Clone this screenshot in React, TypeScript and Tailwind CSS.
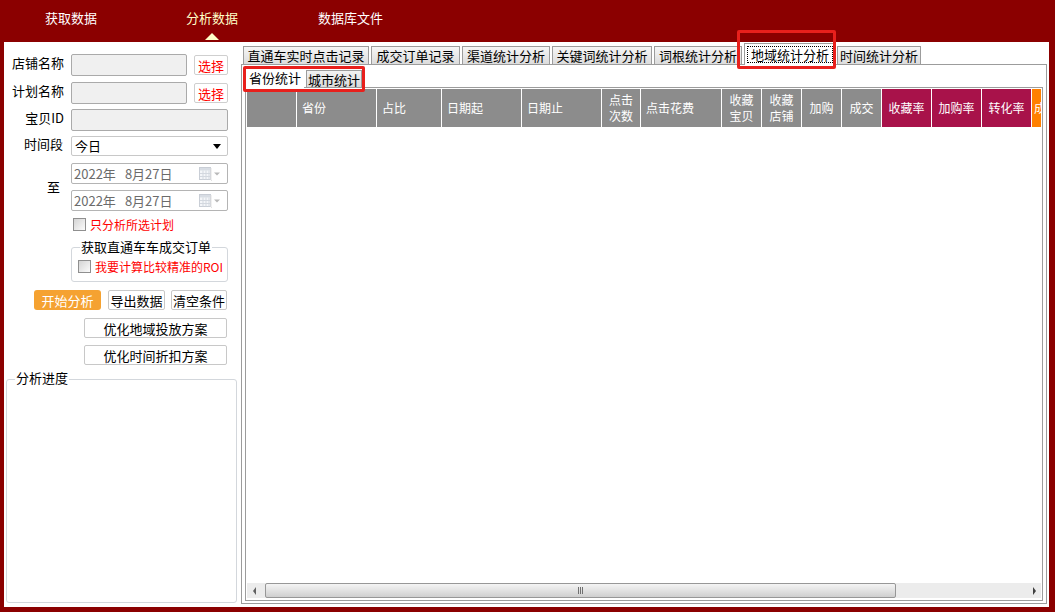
import React from "react";

function Check() {
  return (
    <span className="inline-block w-[13px] h-[13px] border border-[#8f8f8f] bg-linear-to-br from-[#d4d4d4] to-[#fbfbfb] shrink-0" />
  );
}

function CalIcon() {
  return (
    <svg width="22" height="14" viewBox="0 0 22 14">
      <rect x="0.5" y="0.5" width="11" height="12" fill="#f4f6f9" stroke="#c9ced6" />
      <rect x="1" y="1" width="10" height="2.5" fill="#d8dde4" />
      <path d="M1 6.5H11M1 9.5H11M4 3.5V12.5M7 3.5V12.5M10 3.5V12.5" stroke="#d3d8df" strokeWidth="1" />
      <path d="M12 13.5H13M12 1V13" stroke="#e2e2e2" />
      <path d="M15 5.5L21 5.5L18 8.5Z" fill="#b9b9b9" />
    </svg>
  );
}

function DateBox() {
  return (
    <div className="w-[157px] h-[21px] border border-[#b4b4b4] rounded-[2px] bg-white flex items-center pl-[2px] pr-[6px] text-[13px] text-[#6b6b6b] leading-none">
      <span>2022年</span>
      <span className="ml-[9px]">8月27日</span>
      <span className="ml-auto flex items-center">
        <CalIcon />
      </span>
    </div>
  );
}

type Col = { cls: string; t: string[]; center?: boolean };

const cols: Col[] = [
  { cls: "w-[50px] bg-[#8c8c8c]", t: [""] },
  { cls: "w-[80px] bg-[#8c8c8c]", t: ["省份"] },
  { cls: "w-[65px] bg-[#8c8c8c]", t: ["占比"] },
  { cls: "w-[80px] bg-[#8c8c8c]", t: ["日期起"] },
  { cls: "w-[80px] bg-[#8c8c8c]", t: ["日期止"] },
  { cls: "w-[39px] bg-[#8c8c8c]", t: ["点击", "次数"], center: true },
  { cls: "w-[81px] bg-[#8c8c8c]", t: ["点击花费"] },
  { cls: "w-[40px] bg-[#8c8c8c]", t: ["收藏", "宝贝"], center: true },
  { cls: "w-[40px] bg-[#8c8c8c]", t: ["收藏", "店铺"], center: true },
  { cls: "w-[40px] bg-[#8c8c8c]", t: ["加购"], center: true },
  { cls: "w-[40px] bg-[#8c8c8c]", t: ["成交"], center: true },
  { cls: "w-[50px] bg-[#a8124a]", t: ["收藏率"], center: true },
  { cls: "w-[50px] bg-[#a8124a]", t: ["加购率"], center: true },
  { cls: "w-[50px] bg-[#a8124a]", t: ["转化率"], center: true },
];

const tabs = [
  { t: "直通车实时点击记录", cls: "w-[126px]" },
  { t: "成交订单记录", cls: "w-[89px] ml-[2px]" },
  { t: "渠道统计分析", cls: "w-[88px] ml-[2px]" },
  { t: "关键词统计分析", cls: "w-[100px] ml-[2px]" },
  { t: "词根统计分析", cls: "w-[88px] ml-[2px]" },
];

export default function App() {
  return (
    <div className="w-[1055px] h-[612px] bg-[#8b0000] flex flex-col overflow-hidden relative font-['Noto_Sans_CJK_SC','Noto_Sans',sans-serif] text-black">
      {/* top bar */}
      <div className="h-[42px] flex items-start pl-[45px] text-[13px] leading-[16px] shrink-0">
        <div className="pt-[10px] text-white">获取数据</div>
        <div className="ml-[89px] pt-[10px] flex flex-col items-center text-[#ffffc8]">
          <span>分析数据</span>
          <span className="mt-[7px] w-0 h-0 border-l-[7px] border-r-[7px] border-b-[7px] border-l-transparent border-r-transparent border-b-[#ffffc8]" />
        </div>
        <div className="ml-[80px] pt-[10px] text-white">数据库文件</div>
      </div>

      {/* body */}
      <div className="flex-1 ml-[4px] mr-[6px] mb-[5px] bg-white flex min-h-0">
        {/* left panel */}
        <div className="w-[234px] shrink-0 flex flex-col pt-[12px] pl-[8px] pr-[10px] text-[13px] leading-[16px]">
          <div className="flex items-start h-[22px]">
            <span className="w-[52px] text-right pt-[1px]">店铺名称</span>
            <div className="ml-[7px] w-[116px] h-[22px] border border-[#aaaaaa] rounded-[2px] bg-[#f0f0f0]" />
            <button className="ml-[7px] mt-[1px] w-[34px] h-[20px] border border-[#cfcfcf] rounded-[2px] bg-white text-[#ff0000] text-[13px] leading-none">选择</button>
          </div>
          <div className="flex items-start h-[22px] mt-[6px]">
            <span className="w-[52px] text-right pt-[1px]">计划名称</span>
            <div className="ml-[7px] w-[116px] h-[22px] border border-[#aaaaaa] rounded-[2px] bg-[#f0f0f0]" />
            <button className="ml-[7px] mt-[1px] w-[34px] h-[20px] border border-[#cfcfcf] rounded-[2px] bg-white text-[#ff0000] text-[13px] leading-none">选择</button>
          </div>
          <div className="flex items-start h-[22px] mt-[5px]">
            <span className="w-[52px] text-right pt-[1px]">宝贝ID</span>
            <div className="ml-[7px] w-[157px] h-[22px] border border-[#aaaaaa] rounded-[2px] bg-[#f0f0f0]" />
          </div>
          <div className="flex items-start h-[20px] mt-[5px]">
            <span className="w-[52px] text-right pr-[1px]">时间段</span>
            <div className="ml-[7px] w-[157px] h-[20px] border border-[#c8c8c8] rounded-[2px] bg-white flex items-center pl-[3px] pr-[6px]">
              <span>今日</span>
              <span className="ml-auto w-0 h-0 border-l-[4px] border-r-[4px] border-t-[5px] border-l-transparent border-r-transparent border-t-black" />
            </div>
          </div>
          <div className="flex items-center mt-[7px]">
            <span className="w-[52px] text-right pr-[4px]">至</span>
            <div className="ml-[7px] flex flex-col gap-[6px]">
              <DateBox />
              <DateBox />
            </div>
          </div>
          <div className="flex items-center mt-[7px] ml-[61px] h-[13px]">
            <Check />
            <span className="ml-[4px] text-[12px] text-[#ff0000]">只分析所选计划</span>
          </div>
          <div className="mt-[16px] ml-[59px] w-[157px] border border-[#d3d7dc] rounded-[3px] flex flex-col pb-[8px]">
            <span className="-mt-[9px] ml-[8px] px-[1px] w-fit bg-white leading-[16px]">获取直通车车成交订单</span>
            <div className="flex items-center mt-[5px] ml-[6px] h-[13px]">
              <Check />
              <span className="ml-[4px] text-[12px] text-[#ff0000]">我要计算比较精准的ROI</span>
            </div>
          </div>
          <div className="flex items-center mt-[8px] ml-[22px] h-[20px]">
            <button className="w-[67px] h-[20px] rounded-[3px] bg-[#f5a231] text-white text-[13px] leading-none">开始分析</button>
            <button className="ml-[7px] w-[57px] h-[20px] rounded-[2px] border border-[#c8c8c8] bg-white text-[13px] leading-none">导出数据</button>
            <button className="ml-[6px] w-[56px] h-[20px] rounded-[2px] border border-[#c8c8c8] bg-white text-[13px] leading-none">清空条件</button>
          </div>
          <button className="mt-[8px] ml-[72px] w-[143px] h-[20px] rounded-[2px] border border-[#c8c8c8] bg-white text-[13px] leading-none">优化地域投放方案</button>
          <button className="mt-[7px] ml-[72px] w-[143px] h-[20px] rounded-[2px] border border-[#c8c8c8] bg-white text-[13px] leading-none">优化时间折扣方案</button>
          <div className="mt-[14px] -ml-[6px] w-[231px] flex-1 mb-[4px] border border-[#d3d7dc] rounded-[3px] flex flex-col">
            <span className="-mt-[10px] ml-[8px] px-[1px] w-fit bg-white leading-[16px]">分析进度</span>
          </div>
        </div>

        {/* right panel */}
        <div className="flex-1 flex flex-col pt-[1px] pl-[3px] pr-[2px] pb-[3px] min-w-0">
          {/* tab strip */}
          <div className="h-[22px] flex items-end pl-[2px] -mb-px relative z-10 text-[13px] leading-none shrink-0">
            {tabs.map((t) => (
              <div
                key={t.t}
                className={`${t.cls} h-[19px] border border-[#9c9c9c] bg-linear-to-b from-[#f6f6f6] to-[#dcdcdc] flex items-center justify-center`}
              >
                {t.t}
              </div>
            ))}
            <div className="ml-[2px] w-[92px] h-[22px] border border-[#9c9c9c] border-b-0 bg-white flex items-center justify-center">
              <span className="border border-dotted border-black px-[3px] py-[1px]">地域统计分析</span>
            </div>
            <div className="ml-[1px] w-[84px] h-[19px] border border-[#9c9c9c] bg-linear-to-b from-[#f6f6f6] to-[#dcdcdc] flex items-center justify-center">
              时间统计分析
            </div>
          </div>
          {/* outer panel */}
          <div className="flex-1 border border-[#9c9c9c] bg-white flex flex-col pt-[2px] px-[3px] pb-[2px] min-h-0">
            {/* sub tabs */}
            <div className="h-[21px] flex items-end pl-[1px] -mb-px relative z-10 text-[13px] leading-none shrink-0">
              <div className="w-[58px] h-[21px] bg-white flex items-center justify-center">省份统计</div>
              <div className="ml-[2px] w-[56px] h-[18px] border border-[#9c9c9c] bg-linear-to-b from-[#f2f2f2] to-[#dadada] flex items-center justify-center pt-[1px]">
                城市统计
              </div>
            </div>
            {/* inner panel */}
            <div className="flex-1 border border-[#9c9c9c] bg-white flex flex-col p-[1px] min-h-0">
              <div className="flex h-[38px] overflow-hidden shrink-0 text-[12px] text-white leading-[16px]">
                {cols.map((c, i) => (
                  <div
                    key={i}
                    className={`${c.cls} shrink-0 border-r border-white flex flex-col justify-center ${c.center ? "items-center" : "pl-[5px]"}`}
                  >
                    {c.t.map((l, j) => (
                      <span key={j}>{l}</span>
                    ))}
                  </div>
                ))}
                <div className="flex-1 min-w-0 bg-[#ff8000] overflow-hidden flex items-center pl-[2px]">
                  <span className="whitespace-nowrap">成</span>
                </div>
              </div>
              <div className="flex-1" />
              {/* scrollbar */}
              <div className="h-[15px] mb-[1px] bg-[#ececec] flex items-center shrink-0">
                <div className="w-[14px] h-full flex items-center justify-center">
                  <span className="w-0 h-0 border-t-[4px] border-b-[4px] border-r-[3px] border-t-transparent border-b-transparent border-r-[#606060]" />
                </div>
                <div className="flex-1 h-full flex items-center">
                  <div className="ml-[4px] w-[631px] h-[15px] border border-[#979797] rounded-[2px] bg-linear-to-b from-[#f4f4f4] via-[#e2e2e2] to-[#cfcfcf] flex items-center justify-center gap-[1px]">
                    <span className="w-px h-[7px] bg-[#707070]" />
                    <span className="w-px h-[7px] bg-[#707070]" />
                    <span className="w-px h-[7px] bg-[#707070]" />
                  </div>
                </div>
                <div className="w-[14px] h-full flex items-center justify-center">
                  <span className="w-0 h-0 border-t-[4px] border-b-[4px] border-l-[3px] border-t-transparent border-b-transparent border-l-[#404040]" />
                </div>
              </div>
            </div>
          </div>
        </div>
      </div>

      {/* red annotation boxes */}
      <div className="absolute left-[737px] top-[30px] w-[99px] h-[39px] border-[3px] border-[#e8201c] rounded-[2px] pointer-events-none z-20" />
      <div className="absolute left-[243px] top-[66px] w-[122px] h-[26px] border-[3px] border-[#e8201c] rounded-[2px] pointer-events-none z-20" />
    </div>
  );
}
